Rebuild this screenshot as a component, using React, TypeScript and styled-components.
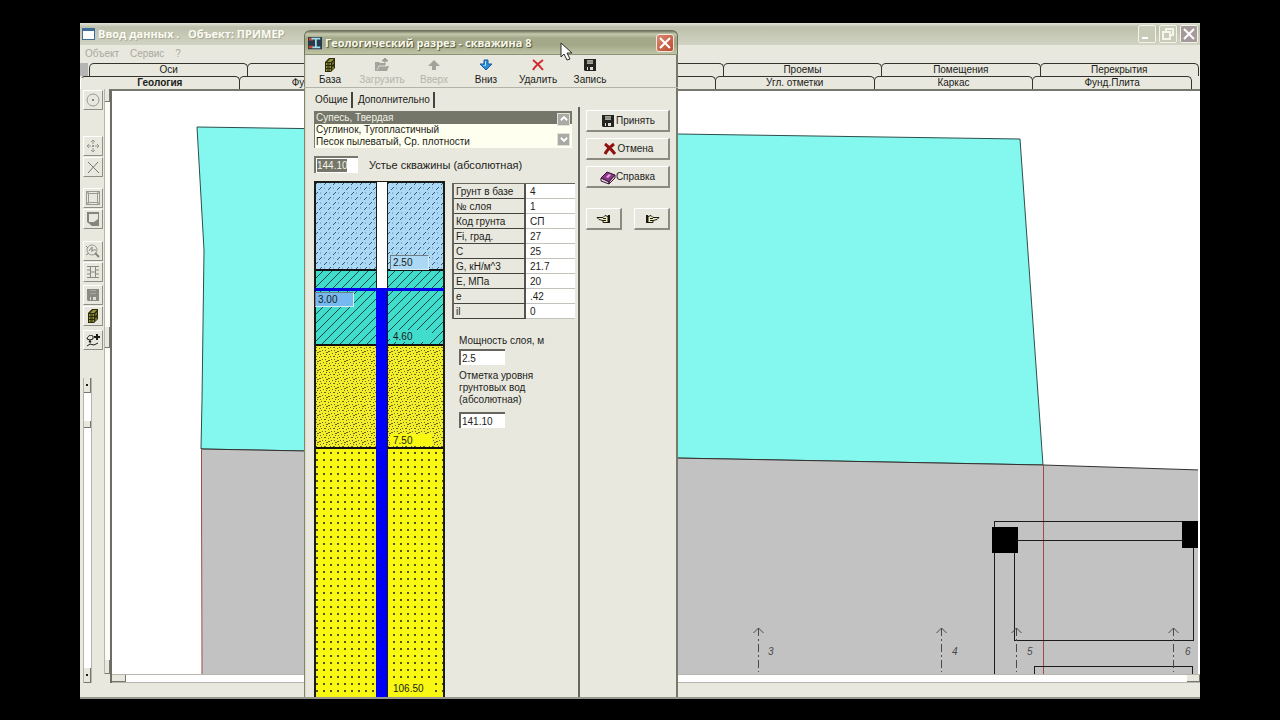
import React from "react";
import styled, { createGlobalStyle } from "styled-components";

const face = "#e8e8df";
const ink = "#1c1c18";

const GlobalStyle = createGlobalStyle`
  * { box-sizing: border-box; }
  body {
    margin: 0;
    background: #000;
    color: ${ink};
    font-family: "Liberation Sans", Arial, sans-serif;
    font-size: 10px;
    line-height: 12px;
  }
  button, input { font: inherit; color: inherit; border-radius: 0; margin: 0; }
`;

const Desktop = styled.div`
  display: flex;
  min-height: 100vh;
  padding: 23px 80px 22px;
`;

const MainWindow = styled.main`
  position: relative;
  display: flex;
  flex: 1;
  flex-direction: column;
  min-width: 0;
  overflow: hidden;
  background: ${face};
  border-bottom: 2px solid #96978a;
`;

const MainTitleBar = styled.header`
  display: flex;
  align-items: center;
  gap: 3px;
  height: 22px;
  padding: 0 2px;
  background: linear-gradient(#e3e4d8 0, #bcbfab 4px, #c6c9b6 12px, #d2d4c3 100%);
`;

const MainTitle = styled.h1`
  flex: 1;
  margin: 0;
  color: #fbfbf4;
  font: bold 11px/16px "Open Sans", sans-serif;
  text-shadow: 1px 1px 1px #a3a692;
  white-space: pre;
`;

const CaptionButton = styled.button<{ $dark?: boolean }>`
  display: flex;
  align-items: center;
  justify-content: center;
  width: 18px;
  height: 18px;
  padding: 0;
  border: 1px solid #f2f2e8;
  border-radius: 2px;
  background: ${(p) => (p.$dark ? "#a6999c" : "#c9cbb9")};
`;

const MenuBar = styled.nav`
  display: flex;
  gap: 11px;
  height: 18px;
  padding: 2px 5px;
`;

const MenuButton = styled.button`
  padding: 0;
  border: 0;
  background: none;
  color: #a8a89e;
  line-height: 14px;
`;

const TabRow = styled.div<{ $front?: boolean }>`
  display: flex;
  height: 13px;
  padding: ${(p) => (p.$front ? "0 9px 0 0" : "0 2px 0 9px")};
  background: ${(p) => (p.$front ? face : `linear-gradient(to right, #b5b5b5 8px, ${face} 8px)`)};
`;

const MainTab = styled.button<{ $active?: boolean; $covered?: boolean }>`
  flex: 1 1 0;
  min-width: 0;
  height: 13px;
  margin-right: -1px;
  padding: 0;
  border: solid #33332e;
  border-width: 1px 1px 0;
  border-left-color: ${(p) => (p.$active ? "#fff" : "#33332e")};
  border-radius: 5px 5px 0 0;
  background: ${face};
  font-weight: ${(p) => (p.$active ? "bold" : "normal")};
  line-height: 12px;
  text-align: ${(p) => (p.$covered ? "left" : "center")};
  text-indent: ${(p) => (p.$covered ? "52px" : "0")};
`;

const Workspace = styled.div`
  display: flex;
  flex: 1;
  min-height: 0;
`;

const Tools = styled.aside`
  display: flex;
  flex-direction: column;
  align-items: flex-start;
  width: 24px;
  padding: 1px 0 0 3px;
`;

const ToolGroup = styled.div<{ $gap: number }>`
  display: flex;
  flex-direction: column;
  gap: 1px;
  margin-bottom: ${(p) => p.$gap}px;
`;

const ToolButton = styled.button`
  display: flex;
  align-items: center;
  justify-content: center;
  width: 20px;
  height: 20px;
  padding: 0;
  border: 1px solid;
  border-color: #fff #8f8f86 #8f8f86 #fff;
  background: ${face};
`;

const ScrollTrack = styled.div<{ $vertical?: boolean }>`
  display: flex;
  flex: ${(p) => (p.$vertical ? "1" : "none")};
  flex-direction: ${(p) => (p.$vertical ? "column" : "row")};
  justify-content: space-between;
  ${(p) => (p.$vertical ? "width" : "height")}: 9px;
  border: solid #b5b5ab;
  border-width: ${(p) => (p.$vertical ? "0 1px" : "1px 0")};
  background: #fff;
`;

const SideScroll = styled.div`
  display: flex;
  flex-direction: column;
  width: 6px;
  margin-bottom: 9px;
  border-left: 1px solid #b5b5ab;
  background: #fbfbf8;
`;

const ScrollKnob = styled.button<{ $vertical?: boolean; $length: number; $space?: string }>`
  display: flex;
  flex: none;
  align-items: center;
  justify-content: center;
  width: ${(p) => (p.$vertical ? "100%" : `${p.$length}px`)};
  height: ${(p) => (p.$vertical ? `${p.$length}px` : "100%")};
  margin-bottom: ${(p) => p.$space ?? "0"};
  padding: 0;
  overflow: hidden;
  border: solid #77776e;
  border-width: 0 1px 1px 0;
  background: ${face};
  line-height: 6px;
`;

const KnobDot = styled.span`
  width: 2px;
  height: 2px;
  background: ${ink};
`;

const CanvasArea = styled.section`
  display: flex;
  flex: 1;
  flex-direction: column;
  min-width: 0;
  border-top: 2px solid #77776f;
  border-left: 2px solid #6d6d66;
`;

const Plan = styled.svg`
  flex: 1;
  width: 100%;
  min-height: 0;
  background: #fff;
  border-right: 2px solid #fff;
`;

const StatusBar = styled.footer`
  height: 14px;
`;

const Dialog = styled.section`
  position: absolute;
  top: 7px;
  bottom: 0;
  left: 224px;
  display: flex;
  flex-direction: column;
  width: 374px;
  overflow: hidden;
  border-radius: 6px 6px 0 0;
  background: ${face};
  box-shadow: inset 1px 0 #83866f, inset 2px 0 #d9dbc9, inset -2px 0 #77796a;
`;

const DialogTitleBar = styled.header`
  display: flex;
  align-items: center;
  gap: 3px;
  height: 25px;
  padding: 1px 3px 0;
  border: 1px solid #6d725c;
  border-bottom-color: #8d9279;
  border-radius: 6px 6px 0 0;
  background: linear-gradient(#74795f 0, #c5c9ae 3px, #a3a98a 7px, #a2a888 14px, #bcc2a2 22px);
`;

const DialogTitle = styled.h2`
  flex: 1;
  margin: 0;
  color: #f7f8ea;
  font: bold 11px/16px "Open Sans", sans-serif;
  text-shadow: 1px 1px 1px #4c503c;
`;

const CloseButton = styled.button`
  display: flex;
  align-items: center;
  justify-content: center;
  width: 18px;
  height: 18px;
  padding: 0;
  border: 1px solid #f3e6dc;
  border-radius: 3px;
  background: linear-gradient(135deg, #d98a72, #bb4a30);
`;

const Toolbar = styled.div`
  display: flex;
  height: 33px;
  border-bottom: 1px solid #b3b3a8;
`;

const ToolbarButton = styled.button`
  display: flex;
  flex-direction: column;
  align-items: center;
  gap: 1px;
  width: 52px;
  padding: 2px 0 0;
  border: 0;
  background: none;
  white-space: nowrap;
  &:disabled { color: #b4b4aa; }
`;

const DialogBody = styled.div`
  display: flex;
  flex: 1;
  min-height: 0;
  padding-left: 10px;
`;

const DataPane = styled.div`
  display: flex;
  flex-direction: column;
  width: 264px;
`;

const PaneTabs = styled.div`
  display: flex;
  height: 23px;
  padding-top: 4px;
`;

const PaneTab = styled.button`
  height: 16px;
  padding: 0 3px 0 1px;
  margin-right: 4px;
  border: 0;
  border-right: 2px solid #44443e;
  background: none;
  line-height: 16px;
`;

const SoilBox = styled.div`
  display: flex;
  width: 258px;
  height: 37px;
  border-top: 1px solid #77776c;
  border-left: 1px solid #77776c;
  background: #fffff0;
`;

const SoilList = styled.ul`
  flex: 1;
  margin: 0;
  padding: 0;
  list-style: none;
`;

const SoilItem = styled.li<{ $selected?: boolean }>`
  height: 12px;
  padding-left: 1px;
  background: ${(p) => (p.$selected ? "#74766a" : "transparent")};
  color: ${(p) => (p.$selected ? "#f2f2e6" : ink)};
`;

const SoilScroll = styled.div`
  display: flex;
  flex-direction: column;
  justify-content: space-between;
  width: 15px;
  padding: 1px 1px 2px 0;
  background: linear-gradient(#74766a 12px, #fffff0 12px);
`;

const SoilArrow = styled.button`
  display: flex;
  align-items: center;
  justify-content: center;
  width: 13px;
  height: 13px;
  padding: 0;
  border: 1px solid #e2e2da;
  background: #a9aaa4;
`;

const MouthRow = styled.label`
  display: flex;
  align-items: center;
  gap: 11px;
  height: 34px;
  padding-top: 1px;
  font-size: 11px;
`;

const MouthField = styled.span`
  display: flex;
  width: 44px;
  height: 17px;
  padding: 1px;
  border: solid #77776c;
  border-width: 2px 0 0 2px;
  background: #fff;
`;

const SelectedInput = styled.input`
  width: 30px;
  height: 13px;
  padding: 0;
  border: 0;
  background: #74766a;
  color: #f5f5ea;
  font-size: 10px;
`;

const SectionRow = styled.div`
  display: flex;
  align-items: flex-start;
  gap: 7px;
`;

const Borehole = styled.div`
  position: relative;
  width: 131px;
  height: 516px;
`;

const DepthInput = styled.input<{ $x: number; $y: number; $fill: string }>`
  position: absolute;
  left: ${(p) => p.$x}px;
  top: ${(p) => p.$y}px;
  width: 39px;
  height: 15px;
  padding: 0 2px;
  border: 1px solid;
  border-color: #6f7f88 #dbe9f0 #dbe9f0 #6f7f88;
  background: ${(p) => p.$fill};
`;

const Properties = styled.div`
  display: flex;
  flex-direction: column;
  width: 123px;
  padding-top: 2px;
`;

const SoilTable = styled.table`
  width: 123px;
  border-top: 1px solid #66665e;
  border-left: 2px solid #66665e;
  border-spacing: 0;
  table-layout: fixed;
`;

const PropName = styled.th`
  width: 72px;
  height: 15px;
  padding: 1px 0 0 2px;
  border-right: 2px solid #55554e;
  border-bottom: 1px solid #44443e;
  font-weight: normal;
  text-align: left;
  white-space: nowrap;
`;

const PropValue = styled.td`
  height: 15px;
  padding: 1px 0 0 4px;
  border-bottom: 1px solid #c3c3bc;
  background: #fff;
`;

const FieldGroup = styled.div`
  display: flex;
  flex-direction: column;
  gap: 5px;
  padding: 16px 0 0 7px;
`;

const FieldLabel = styled.label<{ $gap: number }>`
  display: flex;
  flex-direction: column;
  gap: ${(p) => p.$gap}px;
  white-space: pre-line;
`;

const FieldInput = styled.input`
  width: 46px;
  height: 16px;
  padding: 0 1px;
  border: solid #66665e;
  border-width: 2px 0 0 2px;
  background: #fff;
`;

const Actions = styled.aside`
  display: flex;
  flex: 1;
  flex-direction: column;
  gap: 6px;
  margin-top: 19px;
  padding: 3px 8px 0 6px;
  border-left: 2px solid #66665e;
`;

const ActionButton = styled.button<{ $narrow?: boolean }>`
  display: flex;
  align-items: center;
  justify-content: center;
  width: ${(p) => (p.$narrow ? "36px" : "auto")};
  height: 22px;
  padding: 0;
  border: solid;
  border-width: 1px 2px 2px 1px;
  border-color: #fff #8b8b82 #8b8b82 #fff;
  background: ${face};
`;

const StepButtons = styled.div`
  display: flex;
  justify-content: space-between;
  margin-top: 14px;
`;

const Pointer = styled.svg`
  position: absolute;
  top: 19px;
  left: 480px;
`;

const Svg = ({ size = 16, children }: { size?: number; children: React.ReactNode }) => (
  <svg width={size} height={size} viewBox="0 0 16 16" fill="none" aria-hidden="true">
    {children}
  </svg>
);

const DatabaseIcon = () => (
  <Svg>
    <path d="M3 5l4-4h6v10l-4 4H3z" fill="#2b2b0e" />
    <path d="M5 5l3-3h4l-3 3zM4 6h5v2H4zM4 9h5v2H4zM4 12h5v2H4z" fill="#93933a" />
    <path d="M10 6l2-2v3l-2 1zM10 10l2-1v3l-2 1z" fill="#6f6f2a" />
    <path d="M5 7h3M5 10h3M5 13h3" stroke="#23230c" />
  </Svg>
);
const LoadIcon = () => (
  <Svg>
    <path d="M1 5h4l1 1h5v3h4l-2 5H1z" fill="#a4a49c" />
    <path d="M3 13l2-4h8" stroke="#dcdcd3" />
    <path d="M11 8V4M8 4l3-3 3 3z" stroke="#9c9c94" fill="#9c9c94" />
  </Svg>
);
const UpIcon = () => (
  <Svg><path d="M8 3l6 6h-4v4H6V9H2z" fill="#a2a29b" /></Svg>
);
const DownIcon = () => (
  <Svg>
    <path d="M6 3h4v4h4l-6 6-6-6h4z" fill="#2b8fd6" stroke="#155a9c" />
    <path d="M7 4h1v5L4 8h3z" fill="#a9e2ff" />
  </Svg>
);
const DeleteIcon = () => (
  <Svg><path d="M3 3c4 3 7 6 10 10M13 3C9 6 5 9 3 13" stroke="#d0282c" strokeWidth="2" /></Svg>
);
const DiskIcon = ({ color = "#23231f", gap = "#deded6" }) => (
  <Svg>
    <path d="M2 2h12v12H3l-1-1z" fill={color} />
    <path d="M5 3h6v4H5z" fill="#a6a69d" />
    <path d="M5 10h6v3H5z" fill={gap} />
    <path d="M6 10h2v3H6z" fill={color} />
    <path d="M5 5h6" stroke="#77776e" />
  </Svg>
);
const CancelIcon = () => (
  <Svg><path d="M3 3c4 3 7 6 10 10M12 3C8 6 5 9 3 13" stroke="#8f1212" strokeWidth="3" /></Svg>
);
const BookIcon = () => (
  <Svg>
    <path d="M1 9l6-6 8 3-6 7z" fill="#8c3585" stroke="#3a1038" />
    <path d="M1 9v3l8 3v-2zM9 13v2l6-6V6z" fill="#ddd" stroke="#3a1038" />
    <path d="M6 8l3-3 2 1-3 3z" fill="#e0a8dc" />
  </Svg>
);
const HandIcon = ({ right }: { right?: boolean }) => (
  <Svg>
    <g transform={right ? "translate(16 0) scale(-1 1)" : undefined}>
      <path d="M1 6.500h6l2-2 3 1v6H7v-2L3 8.500z" fill="#f0f0c4" stroke="#1b1b10" />
      <path d="M7 9.500h3M7 7.500h3" stroke="#1b1b10" />
      <path d="M12 4h2v8h-2z" fill="#1b1b10" />
    </g>
  </Svg>
);
const SectionIcon = () => (
  <Svg size={14}>
    <path d="M0 1h16v14H0z" fill="#27394a" />
    <path d="M1 2h5v3H1zM1 11h5v3H1z" fill="#c8452f" />
    <path d="M4 3h10M9 3v10M5 13h9" stroke="#9be0ee" strokeWidth="2" />
  </Svg>
);
const CrossIcon = ({ color }: { color: string }) => (
  <Svg><path d="M3 3l10 10M13 3L3 13" stroke={color} strokeWidth="2" /></Svg>
);

const grey = "#9a9a92";
const TargetIcon = () => (
  <Svg><circle cx="8" cy="8" r="6" stroke={grey} /><circle cx="8" cy="8" r="1" fill="#66665f" /></Svg>
);
const MoveIcon = () => (
  <Svg>
    <path d="M8 2v4M8 10v4M2 8h4M10 8h4M6 4l2-2 2 2M6 12l2 2 2-2M4 6L2 8l2 2M12 6l2 2-2 2" stroke={grey} />
    <path d="M7 7h2v2H7z" fill={grey} />
  </Svg>
);
const CutIcon = () => (
  <Svg><path d="M3 3l11 11M13 3L3 14" stroke="#77776e" /></Svg>
);
const FrameIcon = () => (
  <Svg>
    <path d="M1 1h3v3H1zM12 1h3v3h-3zM1 12h3v3H1zM12 12h3v3h-3z" fill="#b3b3aa" />
    <path d="M1.500 1.500h13v13h-13zM3.500 3.500h9v9h-9z" stroke={grey} />
  </Svg>
);
const CornerIcon = () => (
  <Svg>
    <path d="M2 1h12v14H7l-5-4z" fill="#85857d" />
    <path d="M4 3h9v5l-4 3H4z" fill="#e8e8df" />
  </Svg>
);
const ZoomIcon = () => (
  <Svg>
    <circle cx="7" cy="7" r="5" stroke={grey} />
    <path d="M10 10l4 4" stroke="#85857d" strokeWidth="2" />
    <path d="M4 8l3-4v5M7 7h4M1 3l2 2M1 12l3-2" stroke="#85857d" />
  </Svg>
);
const BeamIcon = () => (
  <Svg><path d="M2 2.500h12M2 13.500h12M5.500 3v10M10.500 3v10M6 8h4M2 6h3M2 10h3M11 6h3M11 10h3" stroke="#8b8b83" /></Svg>
);
const WandIcon = () => (
  <Svg>
    <path d="M2 7c1-4 4-4 6-3v3L5 8zM2 14l3-2 4 1 4-2" stroke="#1b1b18" />
    <path d="M12 2v6M9 5h6M4 9l2 1" stroke="#1b1b18" strokeWidth="2" />
  </Svg>
);

const rearTabs = ["Оси", "", "", "", "Проемы", "Помещения", "Перекрытия"];
const frontTabs = ["Геология", "Фу", "", "", "Угл. отметки", "Каркас", "Фунд.Плита"];

const soilProps = [
  ["Грунт в базе", "4"],
  ["№ слоя", "1"],
  ["Код грунта", "СП"],
  ["Fi, град.", "27"],
  ["C", "25"],
  ["G, кН/м^3", "21.7"],
  ["E, МПа", "20"],
  ["e", ".42"],
  ["il", "0"],
];

const axes = [
  { x: 758, labelX: 768, n: "3" },
  { x: 941, labelX: 952, n: "4" },
  { x: 1016, labelX: 1027, n: "5" },
  { x: 1173, labelX: 1185, n: "6" },
];

const SitePlan = () => (
  <Plan viewBox="112 91 1086 583" preserveAspectRatio="xMinYMin slice" role="img">
    <path d="M197 127L1020 139L1043 465L201 449L202 400L204 250z" fill="#84f8ee" stroke="#2d4f4c" />
    <path d="M201 449L1043 465L1200 470V676H202V520z" fill="#c2c2c2" />
    <path d="M201 449L1043 465L1200 470" fill="none" stroke="#34302f" />
    <path d="M201.500 449V500L202 674M1043.500 465V674" fill="none" stroke="#a04a4a" />
    <g fill="none" stroke="#1b1b1b" shapeRendering="crispEdges">
      <path d="M994.500 674V521.500H1200M1014.500 540.500H1193.500V640.500H1014.500zM1034.500 674V666.500H1192.500V674" />
    </g>
    <path d="M992 527h26v26h-26zM1182 521h18v27h-18z" fill="#000" />
    {axes.map((a) => (
      <g key={a.n} stroke="#4a4a4a" fill="none">
        <path d={`M${a.x - 4.5} 633l5 -5l5 5`} />
        <path d={`M${a.x + 0.5} 628V672`} strokeDasharray="8 3 2 3" />
        <text x={a.labelX} y="655" fill="#4a4a4a" stroke="none" fontSize="10" fontStyle="italic">
          {a.n}
        </text>
      </g>
    ))}
  </Plan>
);

const BoreholeDrawing = () => (
  <svg width="131" height="516" viewBox="0 0 131 516" role="img">
    <defs>
      <pattern id="loam" width="9" height="10" patternUnits="userSpaceOnUse">
        <rect width="9" height="10" fill="#abd9f5" />
        <path d="M1 4l3-3M5 9l3-3" stroke="#33556e" />
        <path d="M6 2h1M1 7h1" stroke="#5c87a3" />
      </pattern>
      <pattern id="clay" width="9" height="9" patternUnits="userSpaceOnUse">
        <rect width="9" height="9" fill="#40dccc" />
        <path d="M-1 10L10 -1M-1 1L1 -1M8 10L10 8" stroke="#0c4a46" />
      </pattern>
      <pattern id="silt" width="9" height="9" patternUnits="userSpaceOnUse">
        <rect width="9" height="9" fill="#f3ee2c" />
        <path d="M0 1.500h1M3 0.500h2M6 2.500h1M1 4.500h2M5 5.500h1M7 4.500h1M2 7.500h1M5 8.500h2M8 7.500h1M3 2.500h1" stroke="#6b6410" />
      </pattern>
      <pattern id="sand" x="0" y="3" width="7" height="7" patternUnits="userSpaceOnUse">
        <rect width="7" height="7" fill="#f8f812" />
        <rect x="2" y="2" width="2" height="2" fill="#55550e" />
      </pattern>
    </defs>
    <rect width="131" height="89" fill="url(#loam)" />
    <rect y="89" width="131" height="75" fill="url(#clay)" />
    <rect y="164" width="131" height="103" fill="url(#silt)" />
    <rect y="267" width="131" height="249" fill="url(#sand)" />
    <path d="M0 89h131M0 164h131M0 267h131" stroke="#111" strokeWidth="2" />
    <path d="M1 0V516M130 0V516M0 1H131" stroke="#1b1b18" strokeWidth="2" />
    <path d="M62 1H74V108H62z" fill="#fff" />
    <path d="M62.500 0V516M73.500 0V516" stroke="#1b1b18" />
    <path d="M62 108H73V516H62z" fill="#0000fa" />
    <path d="M1 108.500H130" stroke="#0000e6" strokeWidth="3" />
    <rect x="76" y="149" width="42" height="12" fill="#40dccc" />
    <rect x="76" y="253" width="42" height="12" fill="#f8f812" />
    <rect x="76" y="501" width="42" height="12" fill="#f8f812" />
    <g fill="#1b1b18" fontSize="10">
      <text x="79" y="159">4.60</text>
      <text x="79" y="263">7.50</text>
      <text x="79" y="511">106.50</text>
    </g>
  </svg>
);

export default function App() {
  return (
    <Desktop>
      <GlobalStyle />
      <MainWindow>
        <MainTitleBar>
          <svg width="13" height="12" aria-hidden="true">
            <path d="M0 0h13v12H0z" fill="#3f6f96" />
            <path d="M1 3h11v8H1z" fill="#fff" />
          </svg>
          <MainTitle>{"Ввод данных .   Объект: ПРИМЕР"}</MainTitle>
          <CaptionButton aria-label="Свернуть">
            <Svg><path d="M3 12h6" stroke="#fff" strokeWidth="2" /></Svg>
          </CaptionButton>
          <CaptionButton aria-label="Развернуть">
            <Svg><path d="M6 6V3h7v6h-3M3 6h7v7H3z" stroke="#f4f4ea" strokeWidth="2" /></Svg>
          </CaptionButton>
          <CaptionButton $dark aria-label="Закрыть">
            <CrossIcon color="#fff" />
          </CaptionButton>
        </MainTitleBar>
        <MenuBar>
          <MenuButton>Объект</MenuButton>
          <MenuButton>Сервис</MenuButton>
          <MenuButton>?</MenuButton>
        </MenuBar>
        <TabRow role="tablist">
          {rearTabs.map((t, i) => <MainTab key={i} role="tab">{t}</MainTab>)}
        </TabRow>
        <TabRow role="tablist" $front>
          {frontTabs.map((t, i) => (
            <MainTab key={i} role="tab" $active={i === 0} $covered={i === 1}>{t}</MainTab>
          ))}
        </TabRow>
        <Workspace>
          <Tools>
            <ToolGroup $gap={26}>
              <ToolButton><TargetIcon /></ToolButton>
            </ToolGroup>
            <ToolGroup $gap={11}>
              <ToolButton><MoveIcon /></ToolButton>
              <ToolButton><CutIcon /></ToolButton>
            </ToolGroup>
            <ToolGroup $gap={12}>
              <ToolButton><FrameIcon /></ToolButton>
              <ToolButton><CornerIcon /></ToolButton>
            </ToolGroup>
            <ToolGroup $gap={3}>
              <ToolButton><ZoomIcon /></ToolButton>
              <ToolButton><BeamIcon /></ToolButton>
            </ToolGroup>
            <ToolGroup $gap={4}>
              <ToolButton><DiskIcon color="#8b8b83" /></ToolButton>
              <ToolButton><DatabaseIcon /></ToolButton>
            </ToolGroup>
            <ToolGroup $gap={28}>
              <ToolButton><WandIcon /></ToolButton>
            </ToolGroup>
            <ScrollTrack $vertical>
              <ScrollKnob $vertical $length={15} $space="28px"><KnobDot /></ScrollKnob>
              <ScrollKnob $vertical $length={7} $space="auto" />
              <ScrollKnob $vertical $length={15}><KnobDot /></ScrollKnob>
            </ScrollTrack>
          </Tools>
          <SideScroll>
            <ScrollKnob $vertical $length={13} $space="225px" />
            <ScrollKnob $vertical $length={21} $space="auto" />
            <ScrollKnob $vertical $length={14} />
          </SideScroll>
          <CanvasArea>
            <SitePlan />
            <ScrollTrack>
              <ScrollKnob $length={14} />
              <ScrollKnob $length={13} />
            </ScrollTrack>
          </CanvasArea>
        </Workspace>
        <StatusBar />

        <Dialog role="dialog" aria-labelledby="dialog-title">
          <DialogTitleBar>
            <SectionIcon />
            <DialogTitle id="dialog-title">Геологический разрез - скважина 8</DialogTitle>
            <CloseButton aria-label="Закрыть"><CrossIcon color="#fff" /></CloseButton>
          </DialogTitleBar>
          <Toolbar>
            <ToolbarButton><DatabaseIcon />База</ToolbarButton>
            <ToolbarButton disabled><LoadIcon />Загрузить</ToolbarButton>
            <ToolbarButton disabled><UpIcon />Вверх</ToolbarButton>
            <ToolbarButton><DownIcon />Вниз</ToolbarButton>
            <ToolbarButton><DeleteIcon />Удалить</ToolbarButton>
            <ToolbarButton><DiskIcon />Запись</ToolbarButton>
          </Toolbar>
          <DialogBody>
            <DataPane>
              <PaneTabs role="tablist">
                <PaneTab role="tab">Общие</PaneTab>
                <PaneTab role="tab">Дополнительно</PaneTab>
              </PaneTabs>
              <SoilBox>
                <SoilList role="listbox">
                  <SoilItem role="option" $selected>Супесь, Твердая</SoilItem>
                  <SoilItem role="option">Суглинок, Тугопластичный</SoilItem>
                  <SoilItem role="option">Песок пылеватый, Ср. плотности</SoilItem>
                </SoilList>
                <SoilScroll>
                  <SoilArrow aria-label="Вверх">
                    <Svg size={10}><path d="M3 10l5-5 5 5" stroke="#fff" strokeWidth="3" /></Svg>
                  </SoilArrow>
                  <SoilArrow aria-label="Вниз">
                    <Svg size={10}><path d="M3 6l5 5 5-5" stroke="#fff" strokeWidth="3" /></Svg>
                  </SoilArrow>
                </SoilScroll>
              </SoilBox>
              <MouthRow>
                <MouthField><SelectedInput defaultValue="144.10" /></MouthField>
                Устье скважины (абсолютная)
              </MouthRow>
              <SectionRow>
                <Borehole>
                  <BoreholeDrawing />
                  <DepthInput $x={76} $y={74} $fill="#abd9f5" defaultValue="2.50" aria-label="Подошва слоя" />
                  <DepthInput $x={1} $y={111} $fill="#76b9f0" defaultValue="3.00" aria-label="Уровень воды" />
                </Borehole>
                <Properties>
                  <SoilTable>
                    <tbody>
                      {soilProps.map(([name, value]) => (
                        <tr key={name}>
                          <PropName scope="row">{name}</PropName>
                          <PropValue>{value}</PropValue>
                        </tr>
                      ))}
                    </tbody>
                  </SoilTable>
                  <FieldGroup>
                    <FieldLabel $gap={2}>
                      Мощность слоя, м
                      <FieldInput defaultValue="2.5" />
                    </FieldLabel>
                    <FieldLabel $gap={6}>
                      {"Отметка уровня\nгрунтовых вод\n(абсолютная)"}
                      <FieldInput defaultValue="141.10" />
                    </FieldLabel>
                  </FieldGroup>
                </Properties>
              </SectionRow>
            </DataPane>
            <Actions>
              <ActionButton><DiskIcon />Принять</ActionButton>
              <ActionButton><CancelIcon />Отмена</ActionButton>
              <ActionButton><BookIcon />Справка</ActionButton>
              <StepButtons>
                <ActionButton $narrow aria-label="Назад"><HandIcon /></ActionButton>
                <ActionButton $narrow aria-label="Вперед"><HandIcon right /></ActionButton>
              </StepButtons>
            </Actions>
          </DialogBody>
        </Dialog>
        <Pointer width="14" height="20" viewBox="0 0 14 20" aria-hidden="true">
          <path d="M1 1V15L4 12L7 18L10 17L7 11H12z" fill="#fff" stroke="#2c2c26" />
        </Pointer>
      </MainWindow>
    </Desktop>
  );
}
